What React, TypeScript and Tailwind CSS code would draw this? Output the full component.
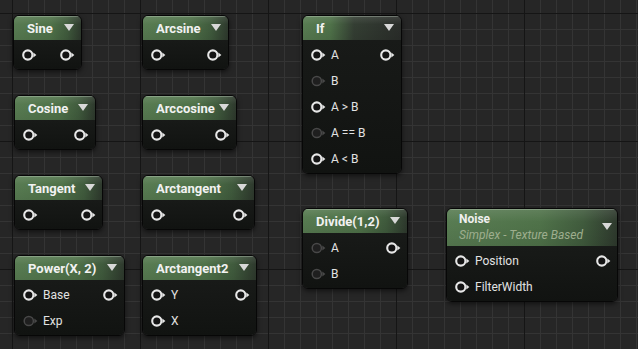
import React from "react";

type PinDef = { label?: string; dim?: boolean };
type RowDef = { inp?: PinDef; out?: boolean };

function PinIcon({ dim }: { dim?: boolean }) {
  const stroke = dim ? "#484848" : "#e6e6e6";
  const fill = dim ? "#1f1f1f" : "#141414";
  return (
    <svg width="15" height="12" viewBox="0 0 15 12" className="shrink-0">
      <circle cx="5.8" cy="6" r="4.6" fill={fill} stroke={stroke} strokeWidth={dim ? 1.5 : 2.1} />
      <path d="M11.3 3.6 L14.4 6 L11.3 8.4 Z" fill={stroke} />
    </svg>
  );
}

function Caret() {
  return (
    <svg width="10" height="7" viewBox="0 0 10 7" className="shrink-0 -mt-[3px]">
      <path d="M0 0 H10 L5 7 Z" fill="#d8d8d8" />
    </svg>
  );
}

const GREEN =
  "bg-[linear-gradient(180deg,rgba(255,255,255,0.10)_0%,rgba(255,255,255,0)_35%,rgba(0,0,0,0.08)_100%),linear-gradient(90deg,#587c52_0%,#4f7249_55%,#405b3d_80%,#2e392d_100%)]";
const GREEN_IF =
  "bg-[linear-gradient(180deg,rgba(255,255,255,0.10)_0%,rgba(255,255,255,0)_35%,rgba(0,0,0,0.08)_100%),linear-gradient(90deg,#587c52_0%,#4f7249_28%,#343e33_52%,#2a2d2a_100%)]";

function GraphNode({
  x,
  y,
  w,
  title,
  subtitle,
  rows,
  header = GREEN,
}: {
  x: number;
  y: number;
  w: number;
  title: string;
  subtitle?: string;
  rows: RowDef[];
  header?: string;
}) {
  return (
    <div
      className="absolute rounded-[6px] border border-[#070707] overflow-hidden shadow-[0_2px_5px_rgba(0,0,0,0.55)]"
      style={{ left: x, top: y, width: w }}
    >
      {subtitle ? (
        <div className={`${header} h-[37px] flex items-center justify-between pl-[12px] pr-[5px] shadow-[inset_0_1px_0_rgba(200,215,200,0.35)]`}>
          <div className="flex flex-col">
            <span className="text-[12px] font-bold leading-[14px] text-[#f0f0f0]">{title}</span>
            <span className="text-[12px] italic leading-[16px] text-[#9eae8e] mt-[1px]">{subtitle}</span>
          </div>
          <Caret />
        </div>
      ) : (
        <div className={`${header} h-[24px] flex items-center justify-between pl-[13px] pr-[7px] pt-[1px] shadow-[inset_0_1px_0_rgba(200,215,200,0.35)]`}>
          <span className="text-[13px] font-bold leading-none text-[#f2f2f2] whitespace-nowrap">{title}</span>
          <Caret />
        </div>
      )}
      <div className="bg-[linear-gradient(180deg,#181a18_0%,#111311_100%)] pt-[2px] pb-[1px]">
        {rows.map((r, i) => (
          <div key={i} className="h-[26px] flex items-center justify-between pl-[8px] pr-[6px]">
            <div className="flex items-center gap-[5px]">
              {r.inp && <PinIcon dim={r.inp.dim} />}
              {r.inp?.label && (
                <span className="text-[12px] leading-none text-[#e2e2e2] whitespace-nowrap">{r.inp.label}</span>
              )}
            </div>
            {r.out && <PinIcon />}
          </div>
        ))}
      </div>
    </div>
  );
}

function Grid() {
  const majorX = [12, 140, 268, 396, 524];
  const majorY = [13, 141, 269];
  return (
    <svg className="absolute inset-0" width="638" height="349">
      <defs>
        <pattern id="minorGrid" width="16" height="16" patternUnits="userSpaceOnUse" x="12" y="13">
          <path d="M0 0.5 H16 M0.5 0 V16" stroke="#343434" strokeWidth="1" fill="none" />
        </pattern>
      </defs>
      <rect width="638" height="349" fill="#262626" />
      <rect width="638" height="349" fill="url(#minorGrid)" />
      {majorX.map((v) => (
        <line key={"x" + v} x1={v + 0.5} y1="0" x2={v + 0.5} y2="349" stroke="#151515" strokeWidth="1" />
      ))}
      {majorY.map((v) => (
        <line key={"y" + v} x1="0" y1={v + 0.5} x2="638" y2={v + 0.5} stroke="#151515" strokeWidth="1" />
      ))}
    </svg>
  );
}

export default function App() {
  const single: RowDef[] = [{ inp: {}, out: true }];
  return (
    <div className="relative w-[638px] h-[349px] overflow-hidden bg-[#262626] font-['Roboto',sans-serif]">
      <Grid />
      <GraphNode x={13} y={15} w={69} title="Sine" rows={single} />
      <GraphNode x={142} y={15} w={87} title="Arcsine" rows={single} />
      <GraphNode x={14} y={95} w={82} title="Cosine" rows={single} />
      <GraphNode x={142} y={95} w={95} title="Arccosine" rows={single} />
      <GraphNode x={14} y={175} w={89} title="Tangent" rows={single} />
      <GraphNode x={142} y={175} w={113} title="Arctangent" rows={single} />
      <GraphNode
        x={14}
        y={255}
        w={111}
        title="Power(X, 2)"
        rows={[
          { inp: { label: "Base" }, out: true },
          { inp: { label: "Exp", dim: true } },
        ]}
      />
      <GraphNode
        x={142}
        y={255}
        w={115}
        title="Arctangent2"
        rows={[
          { inp: { label: "Y" }, out: true },
          { inp: { label: "X" } },
        ]}
      />
      <GraphNode
        x={302}
        y={15}
        w={100}
        title="If"
        header={GREEN_IF}
        rows={[
          { inp: { label: "A" }, out: true },
          { inp: { label: "B", dim: true } },
          { inp: { label: "A > B" } },
          { inp: { label: "A == B", dim: true } },
          { inp: { label: "A < B" } },
        ]}
      />
      <GraphNode
        x={302}
        y={208}
        w={106}
        title="Divide(1,2)"
        rows={[
          { inp: { label: "A", dim: true }, out: true },
          { inp: { label: "B", dim: true } },
        ]}
      />
      <GraphNode
        x={446}
        y={208}
        w={172}
        title="Noise"
        subtitle="Simplex - Texture Based"
        rows={[
          { inp: { label: "Position" }, out: true },
          { inp: { label: "FilterWidth" } },
        ]}
      />
    </div>
  );
}
